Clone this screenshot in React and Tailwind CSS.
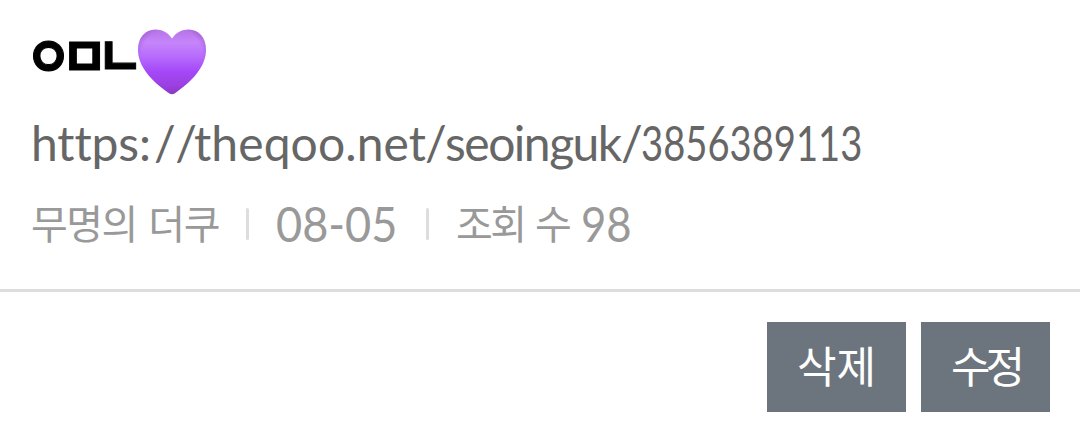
import React from 'react';

const PurpleHeart = () => (
  <svg viewBox="0 0 70 66" className="w-[70px] h-[66px] mt-px" aria-hidden="true">
    <defs>
      <linearGradient id="heartFill" x1="0" y1="0" x2="0" y2="1">
        <stop offset="0" stopColor="#b673e6" />
        <stop offset="0.2" stopColor="#c585fa" />
        <stop offset="0.42" stopColor="#b76bfc" />
        <stop offset="0.65" stopColor="#a448f8" />
        <stop offset="1" stopColor="#963bd2" />
      </linearGradient>
      <radialGradient id="heartEdge" cx="0.5" cy="0.42" r="0.6">
        <stop offset="0.75" stopColor="#7d35b0" stopOpacity="0" />
        <stop offset="1" stopColor="#7d35b0" stopOpacity="0.45" />
      </radialGradient>
    </defs>
    <path d="M35 9.500C31 3.500 25 .5 18.500 .5C8 .5 1 9 1 20.500C1 38 15 52 31 63.500Q35 67 39 63.500C55 52 69 38 69 20.500C69 9 62 .5 51.500 .5C45 .5 39 3.500 35 9.500Z" fill="url(#heartFill)" />
    <path d="M35 9.500C31 3.500 25 .5 18.500 .5C8 .5 1 9 1 20.500C1 38 15 52 31 63.500Q35 67 39 63.500C55 52 69 38 69 20.500C69 9 62 .5 51.500 .5C45 .5 39 3.500 35 9.500Z" fill="url(#heartEdge)" />
  </svg>
);

const Separator = () => <span className="w-[3px] h-8 rounded-full bg-[#dddddd] shrink-0"></span>;

const App = () => {
  return (
    <div className="w-[1080px] h-[433px] bg-white overflow-hidden whitespace-nowrap font-['Lato','Noto_Sans_CJK_KR',sans-serif]">
      <div className="h-[289px] pl-8 pt-7">
        {/* Title */}
        <h1 className="flex items-start h-[72px]">
          <span className="w-[105px] h-[54px] -indent-[7px] text-[51px] leading-[50px] tracking-[-11px] font-bold text-black origin-center scale-y-110 font-['Noto_Sans_CJK_KR',sans-serif] [-webkit-text-stroke:1px_black]">ㅇㅁㄴ</span>
          <PurpleHeart />
        </h1>

        <p className="flex h-[88px] text-[48px] leading-[85px] text-[#666666] [font-variant-ligatures:none]">
          <span className="w-[122px] -indent-px tracking-[-0.1px]">https:</span>
          <span className="w-[40px] tracking-[-0.5px] [font-kerning:none]">//</span>
          <span className="w-[231px] tracking-[0.1px]">theqoo.net</span>
          <span className="w-[20px]">/</span>
          <span className="w-[176px] tracking-[-1.5px]">seoinguk</span>
          <span className="w-[20px]">/</span>
          <span className="origin-left scale-x-[0.795]">3856389113</span>
        </p>

        {/* Meta */}
        <div className="flex items-center h-[72px] text-[#999999] text-[48px]">
          <span className="w-[214px] -mt-[5px] -indent-px text-[40px] tracking-[-1.5px] [word-spacing:4px] font-['Noto_Sans_CJK_KR',sans-serif]">무명의 더쿠</span>
          <Separator />
          <span className="w-[150px] ml-[27px] origin-left scale-x-[0.94]">08-05</span>
          <Separator />
          <span className="ml-[27px] w-[125px] -mt-[5px] text-[40px] tracking-[-2.5px] [word-spacing:4px] font-['Noto_Sans_CJK_KR',sans-serif]">조회 수</span>
          <span className="origin-left scale-x-[0.91]">98</span>
        </div>
      </div>

      {/* Actions */}
      <div className="flex justify-end gap-[15px] border-t-[3px] border-[#dddddd] pt-[30px] pr-[30px] text-white text-[43px] font-['Noto_Sans_CJK_KR',sans-serif]">
        <button className="w-[139px] h-[90px] pb-1.5 bg-[#6c757d]">삭제</button>
        <button className="w-[129px] h-[90px] pb-1.5 bg-[#6c757d] tracking-[-5px]">수정</button>
      </div>
    </div>
  );
};

export default App;
